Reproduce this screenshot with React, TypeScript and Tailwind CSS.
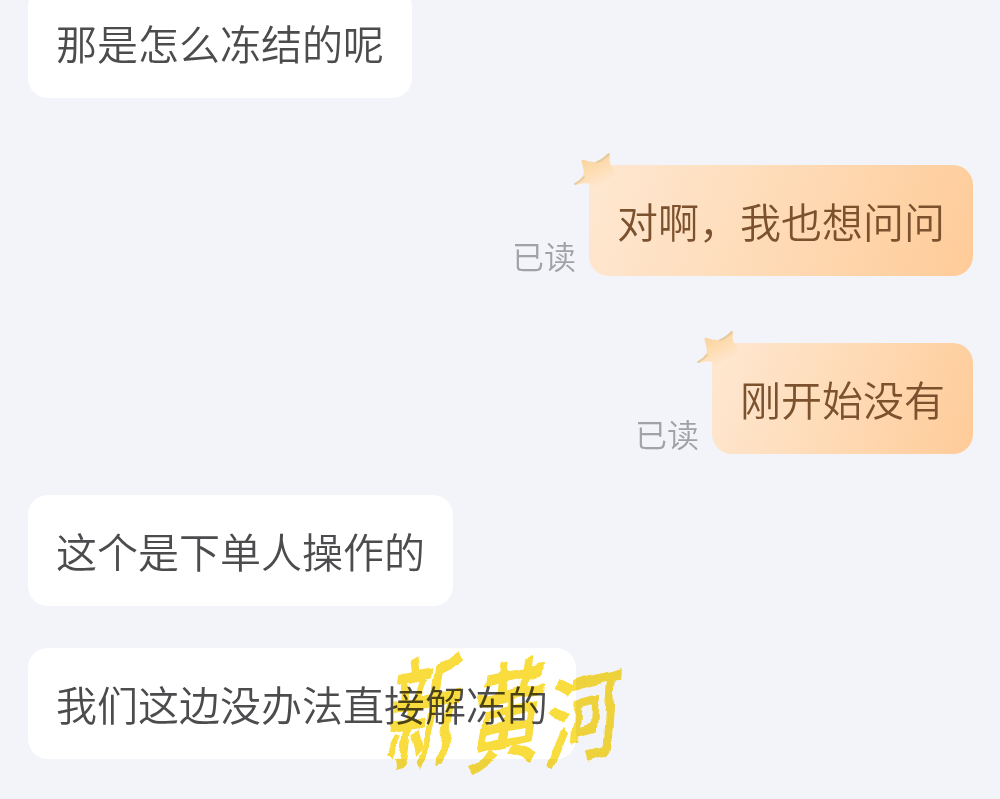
import type { ReactNode } from 'react';

function IncomingMessage({ children }: { children: ReactNode }) {
    return (
        <div className="flex h-[111px] w-fit items-center rounded-[20px] bg-white px-7 text-[41px] leading-none text-[#4c4c4e]">
            {children}
        </div>
    );
}

function StarBadge() {
    return (
        <svg
            className="absolute -top-[13px] -left-[16px] h-[44px] w-[46px]"
            viewBox="0 0 46 44"
            fill="none"
        >
            <defs>
                <linearGradient id="star" x1="10" y1="4" x2="25" y2="34" gradientUnits="userSpaceOnUse">
                    <stop stopColor="#f8d29c" />
                    <stop offset="0.5" stopColor="#fddcb0" />
                    <stop offset="1" stopColor="#fee6cf" />
                </linearGradient>
            </defs>
            <path
                d="M2 31Q7 28 10 24Q12 20 8.500 10Q8 7 11 8Q20 11 24 9.500Q29 8 34 2Q37 0 37 4Q36 10 38 13L44 21Q36 36 26 38Q18 38 17 32Q12 30 3 33Q1 33 2 31Z"
                fill="url(#star)"
            />
            <path
                d="M2 32Q8 29 11 25M24 10Q30 8 36 2"
                stroke="#dcc193"
                strokeOpacity="0.7"
                strokeWidth="1.800"
                strokeLinecap="round"
            />
        </svg>
    );
}

function OutgoingMessage({ children }: { children: ReactNode }) {
    return (
        <div className="flex items-end justify-end">
            <span className="mr-[13px] mb-[5px] text-[32px] leading-none text-[#a1a1a7]">已读</span>
            <div className="relative flex h-[111px] items-center rounded-[20px] bg-linear-[110deg] from-[#fee8d2] via-[#fedcb9] via-45% to-[#ffcb98] px-7 text-[41px] leading-none text-[#7c522e]">
                <StarBadge />
                <span className="relative">{children}</span>
            </div>
        </div>
    );
}

function Watermark() {
    return (
        <svg
            className="absolute top-[640px] left-[370px] h-[150px] w-[270px] overflow-visible mix-blend-multiply"
            viewBox="0 0 270 150"
            fill="#f9dc3c"
        >
            <defs>
                <filter id="brush" x="-5%" y="-5%" width="110%" height="110%">
                    <feTurbulence type="fractalNoise" baseFrequency="0.035" numOctaves="2" seed="4" result="noise" />
                    <feDisplacementMap in="SourceGraphic" in2="noise" scale="10" xChannelSelector="R" yChannelSelector="G" />
                </filter>
            </defs>
            <g filter="url(#brush)" fontSize="76" fontWeight="500" stroke="#f9dc3c" strokeWidth="1" strokeLinejoin="round">
                <text transform="matrix(0.98 -0.2 -0.22 1.6 12 126)">新</text>
                <text transform="matrix(0.98 -0.22 -0.22 1.5 95 126)">黄</text>
                <text transform="matrix(0.96 -0.26 -0.08 1.28 175 124)">河</text>
            </g>
        </svg>
    );
}

export default function App() {
    return (
        <main className="relative h-[799px] w-[1000px] overflow-hidden bg-[#f3f4f9] pr-[27px] pl-7 font-['Noto_Sans_CJK_SC',sans-serif] font-[350] whitespace-nowrap">
            <div className="-mt-[13px] flex flex-col">
                <IncomingMessage>那是怎么冻结的呢</IncomingMessage>

                <div className="mt-[67px] flex flex-col gap-[67px]">
                    <OutgoingMessage>对啊，我也想问问</OutgoingMessage>
                    <OutgoingMessage>刚开始没有</OutgoingMessage>
                </div>

                <div className="mt-[41px] flex flex-col gap-[42px]">
                    <IncomingMessage>这个是下单人操作的</IncomingMessage>
                    <IncomingMessage>我们这边没办法直接解冻的</IncomingMessage>
                </div>
            </div>

            <Watermark />
        </main>
    );
}
